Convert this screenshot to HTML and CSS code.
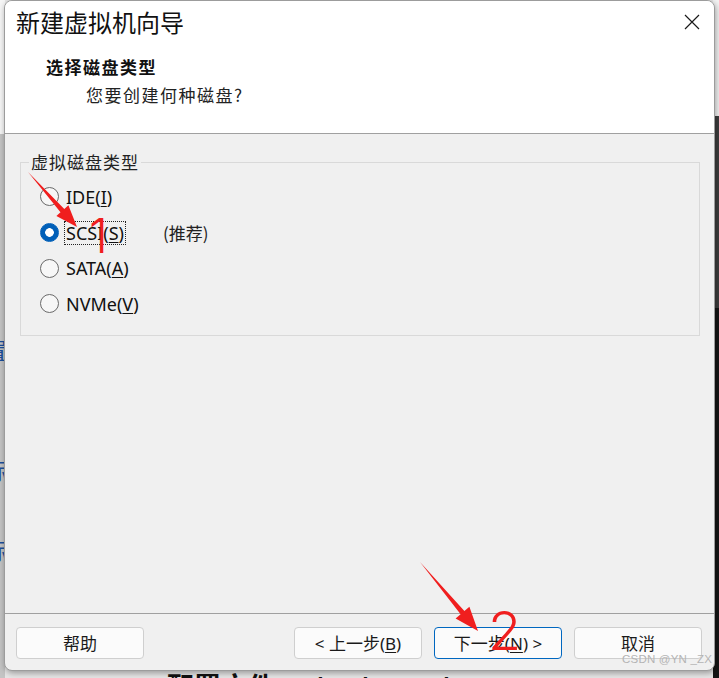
FILE: index.html
```html
<!DOCTYPE html>
<html lang="zh-CN">
<head>
<meta charset="utf-8">
<title>新建虚拟机向导</title>
<link rel="stylesheet" href="styles.css">
</head>
<body>
<div class="backdrop">
  <div class="bd-left"></div>
  <span class="frag frag1">置</span>
  <span class="frag frag2">标</span>
  <span class="frag frag3">标</span>
  <div class="bd-right"></div>
  <div class="bd-bottom-text">配置文件: E:\CE\RHEL\CentOS 7.6.vmx</div>
</div>

<div class="dialog">
  <div class="header">
    <div class="title">新建虚拟机向导</div>
    <svg class="close" width="16" height="16" viewBox="0 0 16 16"><path d="M1 1 L15 15 M15 1 L1 15" stroke="#1a1a1a" stroke-width="1.2" fill="none"/></svg>
    <div class="subhead">选择磁盘类型</div>
    <div class="subdesc">您要创建何种磁盘?</div>
  </div>
  <div class="body">
    <fieldset class="group">
      <legend>虚拟磁盘类型</legend>
      <div class="opt"><span class="radio"></span><span class="lbl">IDE(<u>I</u>)</span></div>
      <div class="opt"><span class="radio on"></span><span class="lbl focus">SCSI(<u>S</u>)</span><span class="rec">(推荐)</span></div>
      <div class="opt"><span class="radio"></span><span class="lbl">SATA(<u>A</u>)</span></div>
      <div class="opt"><span class="radio"></span><span class="lbl">NVMe(<u>V</u>)</span></div>
    </fieldset>
  </div>
  <div class="footer">
    <button class="btn">帮助</button>
    <div class="spacer"></div>
    <button class="btn">&lt; 上一步(<u>B</u>)</button>
    <button class="btn primary">下一步(<u>N</u>) &gt;</button>
    <button class="btn">取消</button>
  </div>
</div>

<div class="watermark">CSDN @YN _ZX</div>

<svg class="annot" width="719" height="678" viewBox="0 0 719 678">
  <polygon fill="#f01e1e" points="28,172 64.3,208.9 68.4,205.3 77,227 56.4,215.9 60.5,212.3"/>
  <polygon fill="#f01e1e" points="420,562 464.4,611 469.4,606.8 478,631 455.6,618.4 460.6,614.2"/>
</svg>
<span class="num num1">1</span>
<span class="num num2">2</span>
</body>
</html>
```
FILE: styles.css
```css
html, body {
  margin: 0;
  padding: 0;
}
body {
  width: 719px;
  height: 678px;
  overflow: hidden;
  position: relative;
  background: #e6e6e6;
  font-family: "Noto Sans", "Noto Sans CJK SC", sans-serif;
  color: #1a1a1a;
}
.backdrop {
  position: absolute;
  inset: 0;
}
.bd-left {
  position: absolute;
  left: 0;
  top: 0;
  width: 5px;
  height: 678px;
  background: linear-gradient(#f6f6f6 0, #f6f6f6 134px, #c4c4c4 134px);
}
.frag {
  position: absolute;
  left: -15px;
  font-family: "Noto Sans CJK SC", sans-serif;
  font-size: 22px;
  color: #1b4f9c;
}
.frag1 { top: 333px; }
.frag2 { top: 453px; }
.frag3 { top: 533px; }
.bd-right {
  position: absolute;
  right: 0;
  top: 0;
  width: 6px;
  height: 678px;
  background: linear-gradient(#f4f4f4 0, #f4f4f4 116px, #3d3d3d 116px, #3d3d3d 308px, #151515 308px);
}
.bd-bottom-text {
  position: absolute;
  left: 167px;
  top: 666px;
  font-family: "Liberation Sans", "Noto Sans CJK SC", sans-serif;
  font-size: 27px;
  font-weight: bold;
  color: #111;
  white-space: nowrap;
}

.dialog {
  position: absolute;
  left: 4px;
  top: 0;
  width: 709px;
  height: 669px;
  border: 1px solid #9c9c9c;
  border-radius: 8px;
  overflow: hidden;
  background: #f0f0f0;
  box-shadow: 1px 2px 6px rgba(0, 0, 0, 0.35);
  display: flex;
  flex-direction: column;
}
.header {
  position: relative;
  height: 133px;
  background: #fff;
  border-bottom: 1px solid #a0a0a0;
  box-sizing: border-box;
  flex: none;
}
.title {
  position: absolute;
  left: 11px;
  top: 4px;
  font-family: "Noto Sans CJK SC", sans-serif;
  font-size: 24px;
  line-height: 34px;
  color: #111;
}
.close {
  position: absolute;
  left: 679px;
  top: 13px;
}
.subhead {
  position: absolute;
  left: 41px;
  top: 53px;
  font-family: "Noto Sans CJK SC", sans-serif;
  font-size: 17px;
  font-weight: bold;
  letter-spacing: 1.5px;
  line-height: 26px;
  color: #111;
}
.subdesc {
  position: absolute;
  left: 81px;
  top: 81px;
  font-family: "Noto Sans CJK SC", sans-serif;
  font-size: 17px;
  letter-spacing: 1.5px;
  line-height: 26px;
  color: #222;
}
.body {
  flex: 1;
  padding: 16px 14px 0 15px;
}
.group {
  margin: 0;
  padding: 5px 0 13px 8px;
  border: 1px solid #d9d9d9;
  min-width: 0;
}
.group legend {
  padding: 0 2px;
  font-family: "Noto Sans CJK SC", sans-serif;
  font-size: 17px;
  letter-spacing: 1px;
  line-height: 24px;
  color: #222;
}
.opt {
  display: flex;
  align-items: center;
  height: 35.7px;
  padding-left: 11px;
}
.radio {
  width: 17px;
  height: 17px;
  border: 1px solid #6a6a6a;
  border-radius: 50%;
  background: #f7f7f7;
  flex: none;
  box-sizing: content-box;
}
.radio.on {
  border-color: #005fb8;
  background: radial-gradient(circle, #fff 0, #fff 4px, #005fb8 4.6px);
}
.lbl {
  margin-left: 6px;
  font-family: "Noto Sans", sans-serif;
  font-size: 18px;
  line-height: 22px;
  color: #111;
  padding: 0 1px;
}
.lbl u { text-underline-offset: 2px; }
.lbl.focus {
  outline: 1px dotted #222;
  outline-offset: 0;
}
.rec {
  margin-left: 38px;
  font-family: "Noto Sans CJK SC", sans-serif;
  font-size: 17px;
  color: #222;
}
.footer {
  flex: none;
  display: flex;
  align-items: center;
  gap: 12px;
  height: 57px;
  border-top: 1px solid #a0a0a0;
  padding: 0 12px 0 11px;
  box-sizing: border-box;
}
.spacer { flex: 1; }
.btn {
  width: 128px;
  height: 32px;
  background: #fbfbfb;
  border: 1px solid #cfcfcf;
  border-radius: 4px;
  font-family: "Noto Sans", "Noto Sans CJK SC", sans-serif;
  font-size: 17px;
  color: #1a1a1a;
  padding: 0;
  margin-top: 1px;
}
.btn u { text-underline-offset: 2px; }
.btn.primary {
  border-color: #0067c0;
}
.watermark {
  position: absolute;
  left: 622px;
  top: 653px;
  font-family: "Liberation Sans", sans-serif;
  font-size: 11.5px;
  color: #b4b4b4;
  letter-spacing: 0.2px;
}
.annot {
  position: absolute;
  left: 0;
  top: 0;
  pointer-events: none;
}
.num {
  position: absolute;
  font-family: "Inter", "Liberation Sans", sans-serif;
  font-weight: 300;
  color: #f01e1e;
  line-height: 1;
}
.num1 {
  left: 89px;
  top: 212px;
  font-size: 48px;
}
.num2 {
  left: 488px;
  top: 604px;
  font-size: 54px;
}
```
